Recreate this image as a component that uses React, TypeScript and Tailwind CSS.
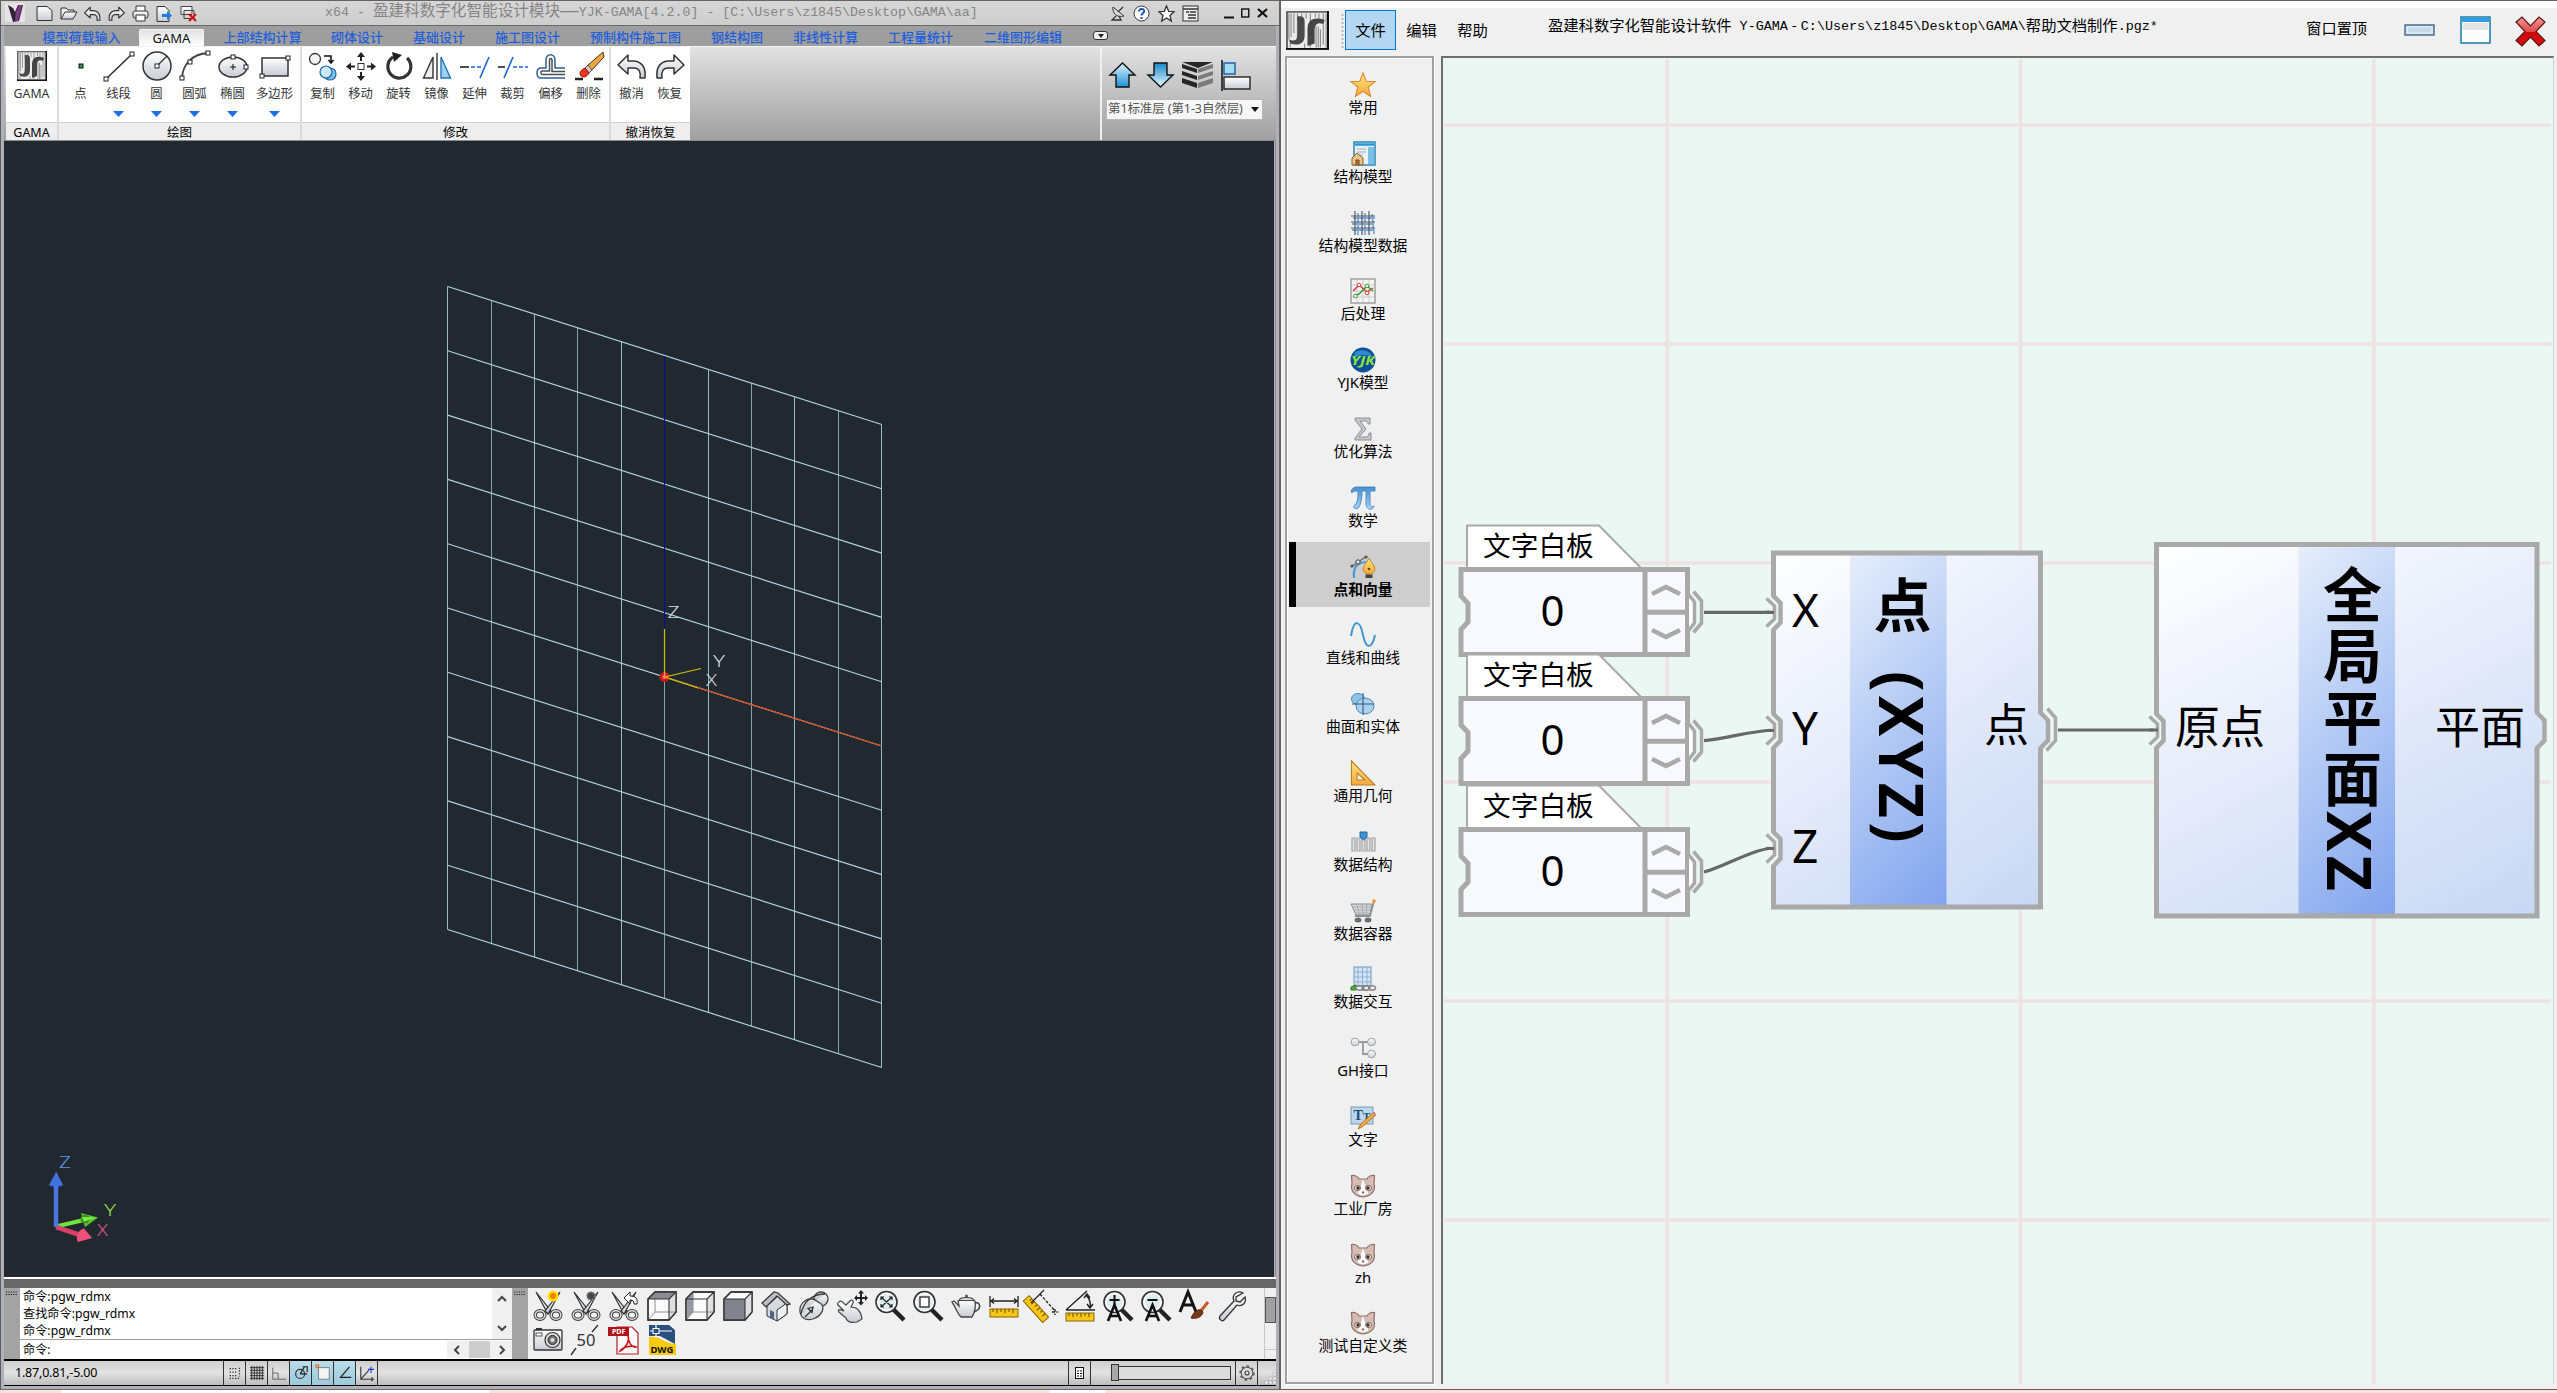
import React from "react";

type Kids = { children?: React.ReactNode };
const UI = "font-['Noto_Sans','Noto_Sans_CJK_SC',sans-serif]";

function Ico({ children, w = 32, h = 32, vb }: Kids & { w?: number; h?: number; vb?: string }) {
  return (
    <svg width={w} height={h} viewBox={vb ?? `0 0 ${w} ${h}`} fill="none" className="block shrink-0 overflow-visible">
      {children}
    </svg>
  );
}

function Defs() {
  return (
    <svg width="0" height="0" className="absolute">
      <defs>
        <linearGradient id="steel" x1="0" y1="0" x2="0" y2="1">
          <stop offset="0" stopColor="#ffffff" />
          <stop offset="1" stopColor="#c9cbd4" />
        </linearGradient>
        <linearGradient id="sky" x1="0" y1="0" x2="0" y2="1">
          <stop offset="0" stopColor="#dff2fc" />
          <stop offset="1" stopColor="#1e94d4" />
        </linearGradient>
        <linearGradient id="skyUp" x1="0" y1="1" x2="0" y2="0">
          <stop offset="0" stopColor="#e8f8fc" />
          <stop offset="1" stopColor="#1588cc" />
        </linearGradient>
        <linearGradient id="gold" x1="0" y1="0" x2="0" y2="1">
          <stop offset="0" stopColor="#ffe680" />
          <stop offset="1" stopColor="#f6a93c" />
        </linearGradient>
        <linearGradient id="red" x1="0" y1="0" x2="0" y2="1">
          <stop offset="0" stopColor="#f59a9a" />
          <stop offset="0.5" stopColor="#e04848" />
          <stop offset="0.52" stopColor="#cc0a0a" />
          <stop offset="1" stopColor="#dd0c0c" />
        </linearGradient>
        <linearGradient id="piBlue" x1="0" y1="0" x2="0" y2="1">
          <stop offset="0" stopColor="#4a90cc" />
          <stop offset="1" stopColor="#a8d4f8" />
        </linearGradient>
        <linearGradient id="nodeBody" x1="0" y1="0" x2="0.65" y2="1.19">
          <stop offset="0" stopColor="#ffffff" />
          <stop offset="0.55" stopColor="#e1e8f9" />
          <stop offset="1" stopColor="#c7d8f4" />
        </linearGradient>
        <linearGradient id="nodeBand" x1="0" y1="0" x2="0.36" y2="1.19">
          <stop offset="0" stopColor="#e6eefa" />
          <stop offset="0.5" stopColor="#b2c9f4" />
          <stop offset="1" stopColor="#82a4ed" />
        </linearGradient>
      </defs>
    </svg>
  );
}

/* ---------- ribbon icons (30 x 30) ---------- */
function GamaLogo({ w, h }: { w: number; h: number }) {
  return (
    <svg width={w} height={h} viewBox="0 0 30 30" preserveAspectRatio="none" className="block shrink-0">
      <rect x="0.7" y="0.7" width="28.6" height="28.6" fill="#ececec" stroke="#555" strokeWidth="1.2" />
      <path d="M2 2v20M3.500 2v18M5.500 2v15M8 2v22M11 2v6M14 2v4M17 2v26M20.500 2v3M23 2v4M26 2v24M28 2v26M24 14v14M21 12v16M22.500 12v16M3 25v3M13 25v4" stroke="#8a8a8a" strokeWidth="0.8" />
      <path d="M9 4c3 0 4 1 4 4v11c0 6-4 8-10 6l-1-3c5 2 6 0 6-5V8c0-2-1-4 1-4z" fill="#4a4a4a" />
      <path d="M15 27V14c0-7 4-10 12-7l-1 3c-5-2-6 1-6 6v9z" fill="#454545" />
      <path d="M0 29.200h30M29.300 0v30" stroke="#111" strokeWidth="1.400" />
    </svg>
  );
}
const Sq = ({ x, y }: { x: number; y: number }) => (
  <rect x={x - 2} y={y - 2} width="4" height="4" fill="#fff" stroke="#222" />
);
const PointI = () => <Ico w={30} h={30}><rect x="13" y="13" width="4" height="4" fill="#2e9a50" stroke="#111" /></Ico>;
const LineI = () => <Ico w={30} h={30}><path d="M2 28L28 3" stroke="#333" strokeWidth="1.6" /><Sq x={2} y={28} /><Sq x={28} y={3} /></Ico>;
const CircleI = () => <Ico w={30} h={30}><circle cx="15" cy="15" r="14" fill="url(#steel)" stroke="#333" strokeWidth="1.5" /><path d="M15 15L25 5" stroke="#333" strokeWidth="1.2" /><Sq x={15} y={15} /></Ico>;
const ArcI = () => <Ico w={30} h={30}><path d="M2 27C3 13 12 3 28 2" stroke="#444" strokeWidth="1.8" /><Sq x={2} y={27} /><Sq x={10} y={11} /><Sq x={28} y={2} /></Ico>;
const EllipseI = () => <Ico w={30} h={30}><ellipse cx="15" cy="16" rx="14" ry="10" fill="url(#steel)" stroke="#333" strokeWidth="1.5" /><path d="M12 16h6M15 13v6" stroke="#111" /><Sq x={15} y={6} /><Sq x={28} y={16} /></Ico>;
const RectI = () => <Ico w={30} h={30}><rect x="2" y="7" width="26" height="18" fill="url(#steel)" stroke="#333" strokeWidth="1.5" /><Sq x={28} y={7} /><Sq x={2} y={25} /></Ico>;
const CopyI = () => <Ico w={30} h={30}><circle cx="7" cy="8" r="5.500" fill="#f4f4f4" stroke="#333" strokeWidth="1.300" /><path d="M16 5h7v6M20.500 9l2.500 3 2.500-3" stroke="#111" strokeWidth="1.600" /><circle cx="22" cy="23" r="6" fill="#7cc4ee" stroke="#2063a8" strokeWidth="1.200" /><circle cx="18" cy="21" r="6" fill="#c8e8fb" stroke="#2063a8" strokeWidth="1.200" /></Ico>;
const MoveI = () => <Ico w={30} h={30}><rect x="12" y="12.500" width="6" height="6" fill="#fff" stroke="#333" /><path d="M15 1l4 5h-3v4h-2V6h-3zM15 30l4-5h-3v-4h-2v4h-3zM0 15.500l5-4v3h4v2H5v3zM30 15.500l-5-4v3h-4v2h4v3z" fill="#222" /></Ico>;
const RotateI = () => <Ico w={30} h={30}><path d="M9 6a11.500 11.500 0 1 0 14 1" stroke="#333" strokeWidth="3.200" /><path d="M8 1l10 3-8 7z" fill="#222" /></Ico>;
const MirrorI = () => <Ico w={30} h={30}><path d="M11 6v21H1.500z" fill="#eee" stroke="#333" strokeWidth="1.400" /><path d="M19 6v21h9.500z" fill="#9fd2ee" stroke="#2476b8" strokeWidth="1.400" /><path d="M15 2v27" stroke="#111" strokeWidth="1.200" /></Ico>;
const ExtendI = () => <Ico w={30} h={30}><path d="M0 16h9" stroke="#222" strokeWidth="1.600" /><path d="M11 16h10" stroke="#1665d8" strokeWidth="1.600" strokeDasharray="4 2" /><path d="M29 6l-9 21" stroke="#1665d8" strokeWidth="1.600" /></Ico>;
const TrimI = () => <Ico w={30} h={30}><path d="M0 16h7" stroke="#222" strokeWidth="1.600" /><path d="M15 16h15" stroke="#1665d8" strokeWidth="1.600" strokeDasharray="4 2" /><path d="M15 6L6 27" stroke="#1665d8" strokeWidth="1.600" /></Ico>;
const OffsetI = () => (
  <Ico w={30} h={30}>
    <path d="M29 27H4c-4-1-4-9 0-10h6V9c0-7 9-7 9 0v8h10" stroke="#2a5f94" strokeWidth="1.500" />
    <path d="M29 23.500H6c-1.500-1-1.500-3 0-3.500h7.500V9c0-2 2.500-2 2.500 0v11.500h13" stroke="#4a4e54" strokeWidth="1.500" />
  </Ico>
);
const EraseI = () => <Ico w={30} h={30}><path d="M1 28h8M20 28h9" stroke="#222" strokeWidth="2.500" /><path d="M29 1L13 15l4 5L30 6z" fill="#e8a848" stroke="#4a3010" /><path d="M14 14l-3 3 4 5 3-3z" fill="#ccc" stroke="#555" /><path d="M11 17c-5 2-6 6-4 8s6 1 8-3z" fill="#e83820" stroke="#a01800" /></Ico>;
const UndoI = ({ flip = false, s = 30 }: { flip?: boolean; s?: number }) => (
  <Ico w={s} h={s} vb="0 0 30 30"><path transform={flip ? "translate(30 0) scale(-1 1)" : undefined} d="M1 14L11 4v6h6c9 1 12 7 11 17h-5c1-6-1-10-6-10h-6v6z" fill="url(#steel)" stroke="#333" strokeWidth={s < 20 ? 2 : 1.5} strokeLinejoin="round" /></Ico>
);

type Tool = { label: string; icon: React.ReactNode; more?: boolean; wide?: boolean };
const drawTools: Tool[] = [
  { label: "点", icon: <PointI /> },
  { label: "线段", icon: <LineI />, more: true },
  { label: "圆", icon: <CircleI />, more: true },
  { label: "圆弧", icon: <ArcI />, more: true },
  { label: "椭圆", icon: <EllipseI />, more: true },
  { label: "多边形", icon: <RectI />, more: true, wide: true },
];
const editTools: Tool[] = [
  { label: "复制", icon: <CopyI /> },
  { label: "移动", icon: <MoveI /> },
  { label: "旋转", icon: <RotateI /> },
  { label: "镜像", icon: <MirrorI /> },
  { label: "延伸", icon: <ExtendI /> },
  { label: "裁剪", icon: <TrimI /> },
  { label: "偏移", icon: <OffsetI /> },
  { label: "删除", icon: <EraseI /> },
];
const undoTools: Tool[] = [
  { label: "撤消", icon: <UndoI /> },
  { label: "恢复", icon: <UndoI flip /> },
];

function Panel({ title, tools, cls }: { title: string; tools: Tool[]; cls: string }) {
  return (
    <div className={`flex h-full shrink-0 flex-col bg-white ${cls}`}>
      <div className="flex h-[76px] justify-center pt-[4px]">
        {tools.map((t) => (
          <div key={t.label} className={`flex flex-col items-center ${t.wide ? "w-[46px]" : "w-[38px]"}`}>
            {t.icon}
            <span className="mt-[5px] h-[16px] text-[12.300px] leading-[16px] whitespace-nowrap text-[#333]">{t.label}</span>
            {t.more && (
              <svg width="11" height="6" className="mt-[9px] block"><path d="M0 0h11L5.500 6z" fill="#1a6fe6" /></svg>
            )}
          </div>
        ))}
      </div>
      <div className="h-[18px] border-t border-[#d0d0d0] bg-[#eeeeee] text-center text-[12.500px] leading-[19px] whitespace-nowrap text-black">{title}</div>
    </div>
  );
}

const menuTabs: { t: string; c: string }[] = [
  { t: "模型荷载输入", c: "w-[97px]" },
  { t: "GAMA", c: "" },
  { t: "上部结构计算", c: "w-[107px]" },
  { t: "砌体设计", c: "w-[82px]" },
  { t: "基础设计", c: "w-[82px]" },
  { t: "施工图设计", c: "w-[95px]" },
  { t: "预制构件施工图", c: "w-[121px]" },
  { t: "钢结构图", c: "w-[82px]" },
  { t: "非线性计算", c: "w-[95px]" },
  { t: "工程量统计", c: "w-[95px]" },
  { t: "二维图形编辑", c: "w-[110px]" },
];

function CadTitleBar() {
  return (
    <div className="flex h-[25px] items-center border-b border-[#6a6a6a] bg-gradient-to-b from-[#d6d6d6] to-[#cecece]">
      <div className="ml-[4px]">
        <Ico w={20} h={20}><rect width="20" height="19" fill="#e4e4e4" /><path d="M3 2l5 3 2 4 3-7 5 0-4 16-6 1z" fill="#35203a" /><path d="M11 9l3-7 3 0-4 16-3 0z" fill="#7a3d7c" /></Ico>
      </div>
      <div className="ml-[11px] flex items-center gap-[7px]">
        <Ico w={17} h={17}><path d="M1 1.500h10l5 4v10H1z" fill="url(#steel)" stroke="#333" /></Ico>
        <Ico w={17} h={17}><path d="M1 14V3h5l2 2h6v3" fill="#eee" stroke="#333" /><path d="M1 14l4-7h12l-4 7z" fill="url(#steel)" stroke="#333" /></Ico>
        <UndoI s={17} />
        <UndoI s={17} flip />
        <Ico w={17} h={17}><path d="M4 6V1h9v5" fill="#fff" stroke="#333" /><rect x="1" y="6" width="15" height="7" rx="2" fill="url(#steel)" stroke="#333" /><path d="M4 10h9v6H4z" fill="#fff" stroke="#333" /></Ico>
        <Ico w={17} h={17}><path d="M1 1.500h8l4 4v11H1z" fill="url(#steel)" stroke="#333" /><path d="M6 9h5V6l5 4.500-5 4.500v-3H6z" fill="#1c7fe0" /></Ico>
        <Ico w={17} h={17}><path d="M1 1.500h11v8H1zM4 5.500h10v8H4z" fill="url(#steel)" stroke="#444" /><path d="M9 9l7 7M16 9l-7 7" stroke="#d81010" strokeWidth="2.200" /></Ico>
      </div>
      <div className="ml-[128px] flex w-[660px] items-center whitespace-pre font-['Liberation_Mono','Noto_Sans_CJK_SC',monospace] text-[13.300px] text-[#858585]">
        <span>{"x64 - "}</span>
        <span className="text-[15.600px]">盈建科数字化智能设计模块——</span>
        <span>{"YJK-GAMA[4.2.0] - [C:\\Users\\z1845\\Desktop\\GAMA\\aa]"}</span>
      </div>
      <div className="ml-auto flex items-center pr-[11px]">
        <div className="flex w-[89px] items-center justify-between">
          <Ico w={16} h={16}><path d="M3 2c-1 6 4 11 11 9z" fill="#ddd" stroke="#333" /><path d="M8 7l5-5M6 11l-4 4h9l-2-4" stroke="#333" strokeWidth="1.300" /></Ico>
          <Ico w={17} h={17}><circle cx="8.500" cy="8.500" r="7.500" fill="#fff" stroke="#333" /><path d="M6 6.500c0-3.500 5.300-3.300 5.200 0C11 8.500 8.500 8.300 8.500 10.500M8.500 12v2" stroke="#1d50b8" strokeWidth="2" /></Ico>
          <Ico w={17} h={17}><path d="M8.500 1l2.200 5.300 5.300.4-4 3.700 1.300 5.600-4.800-3-4.800 3L5 10.400 1 6.700l5.300-.4z" fill="#fff" stroke="#333" strokeWidth="1.300" /></Ico>
          <Ico w={17} h={17}><rect x="1" y="1" width="15" height="15" fill="#eee" stroke="#333" /><path d="M1 4h15M4 7h3M8 7h6M6 10h8M6 13h8" stroke="#333" strokeWidth="1.400" /></Ico>
        </div>
        <div className="ml-[25px] flex items-center gap-[7px]">
          <Ico w={10} h={12}><path d="M0 10.500h10" stroke="#111" strokeWidth="2" /></Ico>
          <Ico w={9} h={10}><rect x="0.750" y="1" width="7" height="8" stroke="#111" strokeWidth="1.400" /></Ico>
          <Ico w={11} h={10}><path d="M1 1l9 8M10 1L1 9" stroke="#111" strokeWidth="2.200" /></Ico>
        </div>
      </div>
    </div>
  );
}

function MenuTabs() {
  return (
    <div className="flex h-[20px] items-end bg-[#9e9e9e] pl-[29px]">
      {menuTabs.map((m) =>
        m.t === "GAMA" ? (
          <div key={m.t} className="mr-[5px] ml-[9px] h-[17px] w-[65px] shrink-0 rounded-t-[2px] border border-b-0 border-[#f2f2f2] bg-gradient-to-b from-[#e2e2e2] to-white text-center text-[13px] leading-[17px] text-[#111]">GAMA</div>
        ) : (
          <div key={m.t} className={`h-[17px] shrink-0 text-center text-[13px] leading-[17px] font-medium whitespace-nowrap text-[#1f5fdc] ${m.c}`}>{m.t}</div>
        ),
      )}
      <div className="mb-[6px] ml-[15px] flex h-[9px] w-[15px] items-center justify-center rounded-[3px] border border-[#333] bg-[#f0f0f0]">
        <svg width="6" height="4" className="block"><path d="M0 0h6L3 4z" fill="#222" /></svg>
      </div>
    </div>
  );
}

function Ribbon() {
  return (
    <div className="flex h-[95px] border-t border-b border-t-[#f4f4f4] border-b-[#8a8a8a] bg-gradient-to-b from-[#e2e2e2] to-[#a0a0a0] pl-[2px]">
      <div className="flex h-[93px] shrink-0 gap-[2px] bg-[#dcdcdc]">
        <Panel title="GAMA" tools={[{ label: "GAMA", icon: <GamaLogo w={30} h={30} /> }]} cls="w-[51px]" />
        <Panel title="绘图" tools={drawTools} cls="w-[241px]" />
        <Panel title="修改" tools={editTools} cls="w-[307px]" />
        <Panel title="撤消恢复" tools={undoTools} cls="w-[79px]" />
      </div>
      <div className="ml-auto flex w-[176px] flex-col border-l-2 border-[#f0f0f0] pl-[4px]">
        <div className="flex h-[50px] items-center gap-[8px] pt-[6px] pl-[3px]">
          <Ico w={27} h={26}><path d="M13.500 1L26 13h-6v12H7V13H1z" fill="url(#sky)" stroke="#111" strokeWidth="1.400" /></Ico>
          <div className="ml-[3px]"><Ico w={27} h={26}><path d="M13.500 25L26 13h-6V1H7v12H1z" fill="url(#skyUp)" stroke="#111" strokeWidth="1.400" /></Ico></div>
          <Ico w={31} h={28}>
            <path d="M0 1h31l-15 6zM0 3l15 5V12L0 7zM0 10l15 5V19L0 14zM0 17l15 5V27L0 22z" fill="#262626" />
            <path d="M31 3L16 8V12L31 7zM31 10L16 15V19L31 14zM31 17L16 22V27L31 22z" fill="#7b7b7b" />
          </Ico>
          <Ico w={30} h={31}><path d="M1 0v31" stroke="#111" strokeWidth="1.500" /><rect x="3" y="3" width="11" height="11" fill="#a6dcf0" stroke="#1b64ac" strokeWidth="1.500" /><rect x="3" y="17" width="26" height="12" fill="url(#steel)" stroke="#222" strokeWidth="1.400" /></Ico>
        </div>
        <div className="mt-[2px] flex h-[21px] w-[157px] items-center justify-between border border-[#b8b8b8] bg-[#f6f6f6] pr-[3px] pl-[1px] text-[12.500px] whitespace-nowrap text-[#555]">
          <span className="tracking-[-0.100px]">第1标准层 (第1-3自然层)</span>
          <svg width="8" height="5" className="block"><path d="M0 0h8L4 5z" fill="#111" /></svg>
        </div>
      </div>
    </div>
  );
}

function Viewport() {
  const n = Array.from({ length: 11 }, (_, i) => i);
  return (
    <div className="h-[1136px] w-[1270px] bg-[#212830]">
      <svg width="1270" height="1136" viewBox="4 141 1270 1136" fill="none" className={`block ${UI}`}>
        {n.map((i) => (
          <path
            key={`v${i}`}
            d={i === 5 ? "M664.500 677V998.500" : `M${Math.floor(447.7 + i * 43.4) + 0.5} ${286.5 + i * 13.8}v643`}
            stroke="#a4ccd6"
            strokeWidth="1"
            strokeOpacity={i % 2 ? 0.75 : 0.9}
          />
        ))}
        {n.map((i) => (
          <path key={`h${i}`} d={`M447.700 ${286.5 + i * 64.3}l434 138`} stroke="#a9d3de" strokeWidth="1.200" />
        ))}
        <path d="M664.500 356V630" stroke="#0c0c96" strokeWidth="1" />
        <path d="M664.700 677L881.700 746" stroke="#e2430e" strokeWidth="1.300" />
        <circle cx="664.500" cy="677" r="5" fill="#d01818" />
        <path d="M664.500 629V677L701 668.500M664.500 677L698 688" stroke="#c8c400" strokeWidth="1.200" />
        <circle cx="664.500" cy="677" r="2" fill="#ff7a6a" />
        <g fill="#d4d8da" fontSize="16" fontWeight="300">
          <text x="667.500" y="617.500" textLength="12" lengthAdjust="spacingAndGlyphs">Z</text>
          <text x="713" y="666.500" textLength="12" lengthAdjust="spacingAndGlyphs">Y</text>
          <text x="706" y="685.500" textLength="11" lengthAdjust="spacingAndGlyphs">X</text>
        </g>
        <path d="M58 1226L84 1220" stroke="#6fe43a" strokeWidth="4" />
        <path d="M81 1213L98 1217.500L85 1227z" fill="#5cc42e" />
        <circle cx="85" cy="1219" r="4.500" fill="#3f8f22" />
        <path d="M82 1217l15 0.500-13 4z" fill="#7df04a" />
        <path d="M56 1227L80 1235" stroke="#dc4068" strokeWidth="4.500" />
        <path d="M84 1228.500L92 1238 78 1242c-3-5 0-12 6-13.500z" fill="#ee5078" />
        <path d="M56 1227V1184" stroke="#4a76e0" strokeWidth="4.500" />
        <path d="M56.200 1171.500L63 1185c-4 2-10 2-14 0z" fill="#4270e0" />
        <g fontSize="16" fontWeight="300">
          <text x="59" y="1168" fill="#5a9ae0" textLength="12" lengthAdjust="spacingAndGlyphs">Z</text>
          <text x="104" y="1216" fill="#96dc50" textLength="12" lengthAdjust="spacingAndGlyphs">Y</text>
          <text x="97" y="1236" fill="#d85a8c" textLength="11" lengthAdjust="spacingAndGlyphs">X</text>
        </g>
      </svg>
    </div>
  );
}

/* ---------- lower tool icons (32 x 32) ---------- */
const Scissors = ({ children }: Kids) => (
  <Ico>
    <path d="M4 2l15 19-3 3z" fill="url(#steel)" stroke="#333" strokeWidth="1.200" />
    <path d="M28 2L13 21l3 3z" fill="url(#steel)" stroke="#333" strokeWidth="1.200" />
    <ellipse cx="8" cy="25" rx="4.800" ry="4.300" stroke="#3a3a3a" strokeWidth="3.400" />
    <ellipse cx="24" cy="25" rx="4.800" ry="4.300" stroke="#3a3a3a" strokeWidth="3.400" />
    <ellipse cx="8" cy="25" rx="4.800" ry="4.300" stroke="#dedede" strokeWidth="1.500" />
    <ellipse cx="24" cy="25" rx="4.800" ry="4.300" stroke="#dedede" strokeWidth="1.500" />
    {children}
  </Ico>
);
const Cube = ({ face }: { face: "top" | "left" | "front" }) => (
  <Ico>
    <path d="M2 9l7-7h21v20l-7 8H2z" fill="#fafafa" stroke="#333" strokeWidth="1.300" />
    <path d="M23 9l7-7v20l-7 8z" fill="#dfdfe4" />
    {face === "top" && <path d="M2 9l7-7h21l-7 7z" fill="#8b8d95" />}
    {face === "left" && <path d="M2 9l7-7v20l-7 8z" fill="#9599a4" />}
    {face !== "front" && <path d="M9 2v20h21M9 22l-7 8" stroke="#888" strokeWidth="0.900" />}
    {face === "front" && <path d="M2 9h21v21H2z" fill="#80838d" />}
    <path d="M2 9h21v21M23 9l7-7" stroke="#333" strokeWidth="1.100" />
    <path d="M2 9l7-7h21v20l-7 8H2z" stroke="#333" strokeWidth="1.300" />
  </Ico>
);
const Lens = ({ children }: Kids) => (
  <Ico>
    <path d="M19 19l11 11" stroke="#222" strokeWidth="4.500" />
    <circle cx="12.500" cy="12" r="10.500" fill="#dcebee" stroke="#333" strokeWidth="1.600" />
    <circle cx="12.500" cy="12" r="8.500" stroke="#fff" strokeWidth="1.300" />
    {children}
  </Ico>
);
const Ruler = ({ y = 20 }: { y?: number }) => (
  <>
    <rect x="2" y={y} width="28" height="8" fill="#f5c518" stroke="#8a6408" />
    <path d={`M5 ${y}v3M9 ${y}v4M13 ${y}v3M17 ${y}v4M21 ${y}v3M25 ${y}v4`} stroke="#6a4a00" />
  </>
);
const letterMark = (
  <path d="M6 31L12.500 15 19 31M8.500 26h8" stroke="#111" strokeWidth="2.600" />
);

const rowOne: React.ReactNode[] = [
  <Scissors><circle cx="21" cy="6" r="5.500" fill="#ffe000" /><circle cx="21" cy="6" r="3" fill="#f57c00" /></Scissors>,
  <Scissors><circle cx="21" cy="6" r="4" fill="#444" stroke="#888" strokeDasharray="1 1" strokeWidth="2" /></Scissors>,
  <Scissors><path d="M16 8l6-6v4c6 0 8 3 7 8h-3c0-3-1-4-4-4v4z" fill="#fff" stroke="#222" /></Scissors>,
  <Cube face="top" />,
  <Cube face="left" />,
  <Cube face="front" />,
  <Ico><path d="M7 16v10l10 5 10-7V13L18 6z" fill="#d6d9de" stroke="#333" /><path d="M17 20v11l10-7V13z" fill="#f0f1f3" stroke="#333" /><path d="M2 13L14 2l4 1 12 11-3 1L17 6 6 17z" fill="#b9bdc5" stroke="#333" strokeWidth="1.200" /><path d="M10 20l4 2v8l-4-2z" fill="#4b6582" /></Ico>,
  <Ico><circle cx="23" cy="9" r="7" fill="url(#steel)" stroke="#444" strokeWidth="1.300" /><path d="M2 22c-1-8 6-14 12-13 4 0 5 3 8 4 6 4 2 13-7 16-7 2-12-1-13-7z" fill="url(#steel)" stroke="#444" strokeWidth="1.300" /><path d="M3 24C5 12 14 4 27 4M14 20l-7 7M15 17l-5 1.500 4 4z" stroke="#333" strokeWidth="1.300" fill="#333" fillOpacity="0.15" /></Ico>,
  <Ico><path d="M3 12c2-3 5 2 7 3l4-4c2-2 4 0 3 2l-2 4c6 0 10 4 11 12l-5 3c-6 1-10 0-11-4L3 22c-2-2 1-3 2-2l3 1-6-6c-1-1 0-3 1-3z" fill="url(#steel)" stroke="#444" strokeWidth="1.200" /><path d="M25 0l3 3.500h-2V7h3V5l3 3-3 3V9h-3v3h2l-3 3.500-3-3.500h2V9h-3v2l-3-3 3-3v2h3V3.500h-2z" fill="#222" /></Ico>,
  <Lens><path d="M7 7l11 10M18 7L7 17M7 10V7h3M15 7h3v3M18 14v3h-3M10 17H7v-3" stroke="#222" strokeWidth="1.200" /></Lens>,
  <Lens><rect x="8" y="7" width="9" height="10" fill="#fff" stroke="#333" strokeWidth="1.400" /></Lens>,
  <Ico><path d="M24 13c7-2 8 6 0 9" stroke="#444" strokeWidth="1.600" /><path d="M8 11c4-2 13-2 17 0 1 6 0 11-3 16H11c-4-3-4-8-9-15l2-1 5 5z" fill="url(#steel)" stroke="#444" strokeWidth="1.300" /><path d="M9 10.500c1-4 14-4 15 0z" fill="#ddd" stroke="#444" strokeWidth="1.200" /><circle cx="16.500" cy="6" r="1.500" fill="#555" /></Ico>,
  <Ico><Ruler y={19} /><path d="M2 6v11M30 6v11M3 11h26M6 8.500L3 11l3 2.500M26 8.500l3 2.500-3 2.500" stroke="#222" strokeWidth="1.300" /></Ico>,
  <Ico><g transform="rotate(48 8 8)"><rect x="3" y="10" width="29" height="8" fill="#f5c518" stroke="#8a6408" /><path d="M7 10v3M11 10v4M15 10v3M19 10v4M23 10v3M27 10v4" stroke="#6a4a00" /></g><path d="M5 13L18 0" stroke="#222" strokeWidth="1.300" /><path d="M14 4l15 17M26 22h6M29 19v6" stroke="#222" strokeDasharray="3 1.500" strokeWidth="1.300" /></Ico>,
  <Ico><Ruler y={23} /><path d="M2 20L23 1M2 20h29M22 5c4 4 5 8 4 13M20 8l3-4 3 4M23 14l3 4 3-4" stroke="#222" strokeWidth="1.400" /></Ico>,
  <Lens><path d="M12.500 5v10M7.500 10h10" stroke="#111" strokeWidth="2" />{letterMark}</Lens>,
  <Lens><path d="M7.500 10h10" stroke="#111" strokeWidth="2" />{letterMark}</Lens>,
  <Ico><path d="M2 22L10 2l8 20M5 15h10" stroke="#151515" strokeWidth="3" /><path d="M30 12l-8 10" stroke="#c85a28" strokeWidth="3" /><path d="M23 20c-4-1-7 2-10 8 6 1 11-1 12-6z" fill="#7a3a18" stroke="#4a2008" /></Ico>,
  <Ico><path d="M27 3c-5-3-12 1-9 8L4 26c-2 3 2 6 4 4l13-15c5 2 10-2 8-8l-5 5-4-1 0-4z" fill="url(#steel)" stroke="#333" strokeWidth="1.300" /></Ico>,
];
const rowTwo: React.ReactNode[] = [
  <Ico><rect x="2" y="6" width="28" height="20" rx="1" fill="url(#steel)" stroke="#333" strokeWidth="1.300" /><rect x="4" y="4" width="6" height="2" fill="#333" /><rect x="4" y="9" width="6" height="3" fill="#fff" stroke="#555" /><circle cx="20.500" cy="16" r="7.500" fill="#ddd" stroke="#333" strokeWidth="1.200" /><circle cx="20.500" cy="16" r="4.500" fill="#777" stroke="#222" /><circle cx="20.500" cy="16" r="2" fill="#ddd" /></Ico>,
  <Ico><path d="M22 8l6-7M1 31l5-7" stroke="#333" strokeWidth="1.400" /><text x="6.500" y="22" fontSize="16.500" fill="#333" className={UI}>50</text></Ico>,
  <Ico><path d="M9 3h15l6 6v21H9z" fill="#fafafa" stroke="#b02020" strokeWidth="1.200" /><rect x="0" y="3" width="21" height="9" fill="#b3141c" /><text x="4" y="10.300" fontSize="7" fontWeight="700" fill="#fff" className={UI}>PDF</text><path d="M20 12c2 5-3 13-8 15 2-4 12-6 16-4-4 1-8-5-8-11z" stroke="#d01820" strokeWidth="1.600" /></Ico>,
  <Ico><path d="M3 1h20l6 5v14L14 12H3z" fill="#2a4f7e" /><path d="M3 13c10-2 14 6 27 7v11H3z" fill="#f8ca10" /><path d="M10 1v12M4 7h22" stroke="#fff" strokeWidth="1.200" /><rect x="7" y="4.500" width="6" height="5" fill="#2a4f7e" stroke="#fff" /><text x="4.500" y="28.500" fontSize="9.500" fontWeight="700" fill="#111" className={UI}>DWG</text></Ico>,
];

function Grip({ cls }: { cls: string }) {
  return (
    <div className={`h-full shrink-0 bg-[#a3a3a3] pt-[3px] pl-[2px] ${cls}`}>
      <svg width="12" height="4" className="block"><path d="M0 1h12M0 3.500h12" stroke="#222" strokeDasharray="1.200 1.200" /></svg>
    </div>
  );
}
const Chev = ({ d }: { d: string }) => (
  <svg width="10" height="10" viewBox="0 0 10 10" fill="none" className="block"><path d={d} stroke="#444" strokeWidth="2" /></svg>
);

function CommandArea() {
  return (
    <div className="flex h-[71px] bg-[#f0f0f0]">
      <Grip cls="w-[16px]" />
      <div className="flex w-[492px] flex-col bg-white text-[12.200px] text-black">
        <div className="flex h-[52px] border-b border-[#a89c90]">
          <div className="flex flex-1 flex-col pl-[3px]">
            {["命令:pgw_rdmx", "查找命令:pgw_rdmx", "命令:pgw_rdmx"].map((l, i) => (
              <span key={i} className="h-[17px] leading-[17px]">{l}</span>
            ))}
          </div>
          <div className="flex w-[20px] flex-col items-center justify-between bg-[#f0f0f0] py-[6px]">
            <Chev d="M1 7l4-4 4 4" />
            <Chev d="M1 3l4 4 4-4" />
          </div>
        </div>
        <div className="flex h-[19px] items-center">
          <span className="flex-1 pl-[3px] leading-[18px]">命令:</span>
          <div className="flex h-[17px] w-[65px] items-center justify-between bg-[#f0f0f0] px-[5px]">
            <Chev d="M7 1L3 5l4 4" />
            <div className="h-[17px] w-[21px] bg-[#cdcdcd]" />
            <Chev d="M3 1l4 4-4 4" />
          </div>
        </div>
      </div>
      <Grip cls="w-[16px]" />
      <div className="flex flex-1 flex-col gap-[2px] pt-[2px] pl-[4px]">
        <div className="flex gap-[6px]">{rowOne.map((x, i) => <React.Fragment key={i}>{x}</React.Fragment>)}</div>
        <div className="flex gap-[6px]">{rowTwo.map((x, i) => <React.Fragment key={i}>{x}</React.Fragment>)}</div>
      </div>
      <div className="flex w-[12px] flex-col border-l border-[#c8c8d0] pt-[9px]">
        <div className="h-[26px] border border-[#555] bg-[#a0a0a0]" />
        <div className="mt-[26px] border-t border-[#c8c8d0]" />
      </div>
    </div>
  );
}

const snapIcons: { on?: boolean; g: React.ReactNode }[] = [
  { g: <path d="M3 4h9M3 8h9M3 12h9M14 3v10M3 15h12" stroke="#333" strokeDasharray="1.500 1.500" strokeWidth="1.400" /> },
  { g: <path d="M1 3h16M1 6h16M1 9h16M1 12h16M1 15h16M3 1v16M6 1v16M9 1v16M12 1v16M15 1v16" stroke="#333" strokeWidth="1.100" /> },
  { g: <path d="M2 3v13h15M2 9h6v7" stroke="#666" strokeWidth="1.100" /> },
  { on: true, g: <><circle cx="8" cy="10" r="5" stroke="#333" strokeWidth="1.300" /><path d="M8 10h8M8 10l5-8M11 2l5 0v6" stroke="#222" strokeWidth="1.300" /></> },
  { on: true, g: <><rect x="4" y="3" width="12" height="13" fill="#f4f4f4" stroke="#777" /><rect x="1" y="0" width="3" height="3" stroke="#e06a20" strokeWidth="1.200" /></> },
  { on: true, g: <path d="M14 2L4 14h12" stroke="#222" strokeWidth="1.400" /> },
  { g: <><path d="M2 2v14h14M2 16L11 6M14 14l2 2-2 2" stroke="#333" strokeWidth="1.200" /><path d="M10 5h7M13.500 2v7" stroke="#1838d8" strokeWidth="1.300" /></> },
];

function StatusBar() {
  return (
    <div className="flex h-[27px] border-t-2 border-b border-black bg-gradient-to-b from-[#cfcfcf] via-[#e2e2e2] to-[#bdbdbd]">
      <div className="w-[219px] pl-[11px] text-[12.500px] leading-[23px] tracking-[-0.200px] text-black">1.87,0.81,-5.00</div>
      <div className="flex border-l border-[#333]">
        {snapIcons.map((s, i) => (
          <div key={i} className={`flex h-[24px] w-[22px] items-center justify-center border-r border-r-[#333] ${s.on ? "bg-gradient-to-b from-[#b8dcea] to-[#9ccadc]" : ""}`}>
            <Ico w={16} h={16} vb="0 0 18 18">{s.g}</Ico>
          </div>
        ))}
      </div>
      <div className="ml-auto flex">
        <div className="flex h-[24px] w-[23px] items-center justify-center border-r border-l border-[#333]">
          <Ico w={9} h={12}><rect x="0.500" y="0.500" width="8" height="11" fill="#fff" stroke="#111" /><path d="M2 4h5M2 6.500h5M2 9h5" stroke="#111" strokeDasharray="2 1" /></Ico>
        </div>
        <div className="mt-[4px] ml-[20px] flex h-[15px] w-[120px] items-center">
          <div className="h-[17px] w-[8px] border border-[#333] bg-[#a8a8a8]" />
          <div className="h-[14px] flex-1 border border-l-0 border-[#333] bg-[#dcdcdc]" />
        </div>
        <div className="ml-[4px] flex h-[24px] w-[23px] items-center justify-center border-r border-l border-[#333]">
          <Ico w={16} h={16} vb="0 0 18 18"><circle cx="9" cy="9" r="6.500" stroke="#555" strokeWidth="1.200" /><circle cx="9" cy="9" r="7.800" stroke="#555" strokeWidth="1.600" strokeDasharray="3 3" /><circle cx="9" cy="9" r="2.300" stroke="#444" strokeWidth="1.300" /></Ico>
        </div>
        <div className="flex w-[18px] items-end justify-end pb-px">
          <Ico w={11} h={11}><path d="M8 0h3v3H8zM4 4h3v3H4zM8 4h3v3H8zM0 8h3v3H0zM4 8h3v3H4zM8 8h3v3H8z" fill="#f4f4f4" stroke="#999" strokeWidth="0.500" /></Ico>
        </div>
      </div>
    </div>
  );
}

function CadWindow() {
  return (
    <div className="flex h-[1389px] w-[1279px] shrink-0 flex-col border-l border-l-[#5c5c5c] bg-[#b0b0b8]">
      <CadTitleBar />
      <div className="flex flex-col pr-[3px] pl-[3px]">
        <MenuTabs />
        <Ribbon />
        <div className="border-r border-[#8a8a8a]"><Viewport /></div>
        <div className="h-[11px] border-t-2 border-white bg-[#676767]" />
        <CommandArea />
        <StatusBar />
      </div>
      <div className="mt-auto h-px bg-[#6a6a6a]" />
    </div>
  );
}

/* ---------- category icons (26 x 26) ---------- */
const CatI = () => (
  <Ico w={26} h={26}>
    <path d="M1.500 2.500C5 2 8 4 9 6h8c1-2 4-4 7.500-3.500L24 11c2 6-2 12-11 13C4 23 0 17 2 11z" fill="#d3beb6" stroke="#8e7068" strokeWidth="1.200" />
    <path d="M3.500 4.500l4 2-3 4zM22.500 4.500l-4 2 3 4z" fill="#eab4b0" />
    <path d="M13 6l2.500 8 3 6c-3 3-8 3-11 0l3-6z" fill="#fff" />
    <ellipse cx="7.500" cy="15" rx="3" ry="2.500" fill="#fff" stroke="#7a5c48" /><ellipse cx="18.500" cy="15" rx="3" ry="2.500" fill="#fff" stroke="#7a5c48" />
    <circle cx="8" cy="15" r="1.700" fill="#3a2a20" /><circle cx="18" cy="15" r="1.700" fill="#3a2a20" />
    <path d="M12 19h2l-1 1.500z" fill="#a05050" stroke="#a05050" />
  </Ico>
);
const categories: { t: string; g: React.ReactNode }[] = [
  { t: "常用", g: <Ico w={26} h={26}><path d="M13 1l3.200 8.200 9 .4-7 5.400 2.400 9.500L13 19.200 5.400 24.500l2.400-9.500-7-5.400 9-.4z" fill="url(#gold)" stroke="#d98a2c" strokeWidth="1.100" /></Ico> },
  { t: "结构模型", g: <Ico w={26} h={26}><rect x="4" y="1" width="21" height="23" fill="#e8f2f8" stroke="#1c80b4" strokeWidth="1.400" /><path d="M5 3.500h19" stroke="#2a98d8" strokeWidth="2.500" /><path d="M18 6h6v17h-6z" fill="#7cc0e4" /><path d="M7 8h9M7 11h9M7 14h6" stroke="#9cb0bc" /><path d="M2 17l5-5 6 5v7H2z" fill="#e8c48a" stroke="#8a5c28" /><path d="M6 24v-5h3v5" fill="#b07838" stroke="#704010" /></Ico> },
  { t: "结构模型数据", g: <Ico w={26} h={26}><path d="M3 8h22M2 14h22M2 20h22M8 3v22M15 3v22M22 4l2 20" stroke="#7aa8d8" strokeWidth="1.800" /><path d="M1 6h24M1 12h24M1 18h24M5 1v24M12 1v24M19 1v24" stroke="#555c64" strokeWidth="1.200" /></Ico> },
  { t: "后处理", g: <Ico w={26} h={26}><rect x="1" y="1" width="24" height="24" fill="#f4f4f4" stroke="#9a9a9a" strokeWidth="1.400" /><path d="M2 7h22M2 13h22M2 19h22M7 2v22M13 2v22M19 2v22" stroke="#ccc" /><path d="M3 13l6-6 8 7 6-4" stroke="#d84040" strokeWidth="1.500" /><path d="M4 18l5-2 8-8 6 5" stroke="#3e9a30" strokeWidth="1.500" /><circle cx="9" cy="7" r="1.800" fill="#fff" stroke="#d84040" /><circle cx="17" cy="8" r="1.800" fill="#fff" stroke="#3e9a30" /><circle cx="5.500" cy="18" r="1.800" fill="#fff" stroke="#3e9a30" /><circle cx="17" cy="15" r="1.800" fill="#fff" stroke="#d84040" /></Ico> },
  { t: "YJK模型", g: <Ico w={26} h={26}><circle cx="13" cy="13" r="12.500" fill="#0d4f94" /><path d="M5 5c8-4 16-1 18 6-6-4-12-4-19 0z" fill="#2c8ccc" /><text x="1" y="17.500" fontSize="12" fontStyle="italic" fontWeight="700" fill="#8fe040" textLength="24" lengthAdjust="spacingAndGlyphs" className={UI}>YJK</text></Ico> },
  { t: "优化算法", g: <Ico w={26} h={26}><path d="M5 2h15v6h-2c0-2-1-3-3-3h-5l6 8-7 8h6c3 0 4-1 4-4h2v7H5v-2l7-9-7-9z" fill="#c4c6ca" stroke="#8c9096" /></Ico> },
  { t: "数学", g: <Ico w={26} h={26}><path d="M1 6c2-4 4-4 7-4h17v4h-5v12c0 4 2 4 4 3-1 5-8 4-8-2V6h-4c0 8-1 14-4 17-3 2-6-1-3-3 3-3 3-8 3-14-3 0-5 0-6 2z" fill="url(#piBlue)" stroke="#3c86c4" strokeWidth="0.900" /></Ico> },
  { t: "点和向量", g: <Ico w={26} h={26}><path d="M4 24C3 14 6 8 18 8" stroke="#4a9ad4" strokeWidth="2.200" /><path d="M1 13L17 2" stroke="#666" strokeWidth="1.500" /><circle cx="8" cy="8" r="2.200" fill="#ddd" stroke="#444" /><circle cx="16" cy="3" r="1.600" fill="#555" /><circle cx="2" cy="12" r="1.600" fill="#555" /><path d="M19 4c2 4 6 8 6 12l-3 4h-6l-3-4c0-4 4-8 6-12z" fill="url(#gold)" stroke="#c48a20" /><circle cx="19" cy="15" r="1.300" fill="#6a4a10" /><rect x="15.500" y="20.500" width="7" height="3.500" fill="#444" /></Ico> },
  { t: "直线和曲线", g: <Ico w={26} h={26}><path d="M1 14C4-4 10-2 13 13s9 14 12 0" stroke="#3f96d0" strokeWidth="2" /></Ico> },
  { t: "曲面和实体", g: <Ico w={26} h={26}><ellipse cx="8" cy="8" rx="6.500" ry="5.500" fill="#8ec4ea" stroke="#4a86b8" /><ellipse cx="15" cy="15" rx="9" ry="8" fill="#a8d2f2" stroke="#4a86b8" /><path d="M13 2v22M2 13h22" stroke="#3a5a70" strokeWidth="1.100" /></Ico> },
  { t: "通用几何", g: <Ico w={26} h={26}><path d="M1.500 1L25 25H1.500zM7 13v7h8z" fill="url(#gold)" fillRule="evenodd" stroke="#b88024" strokeWidth="1.100" /></Ico> },
  { t: "数据结构", g: <Ico w={26} h={26}><path d="M2 9h3v13H2zM7 9h3v13H7zM12 9h3v13h-3zM17 9h3v13h-3zM22 9h3v13h-3z" fill="#e4e4e4" stroke="#a4a4a4" strokeWidth="1.200" /><path d="M10 3h7v5l-3.500 3L10 8z" fill="#3c90d4" stroke="#2068a4" /></Ico> },
  { t: "数据容器", g: <Ico w={26} h={26}><path d="M1 6h21l-2 11H6z" fill="#d2d4d6" stroke="#8a8c90" /><path d="M3 9h18M4 12h17M6 15h14M7 6l2 11M12 6l1 11M17 6l-1 11" stroke="#a6a8ac" strokeWidth="0.800" /><path d="M24 3l-4 15H5" stroke="#909296" strokeWidth="1.800" /><circle cx="24" cy="3" r="1.800" fill="#f0962c" /><ellipse cx="8" cy="22" rx="3.500" ry="2.500" fill="#6a6c70" /><ellipse cx="18" cy="22" rx="3.500" ry="2.500" fill="#6a6c70" /></Ico> },
  { t: "数据交互", g: <Ico w={26} h={26}><rect x="4" y="1" width="17" height="19" fill="#d4e4f4" stroke="#6c94bc" /><path d="M4 6h17M4 11h17M4 16h17M8 1v19M12.500 1v19M17 1v19" stroke="#8cb0d4" /><path d="M1 24v-3l5-2v5z" fill="#50b030" stroke="#2c7818" /><ellipse cx="10" cy="22" rx="4" ry="2.200" stroke="#888" strokeWidth="1.500" /><ellipse cx="16" cy="22" rx="4" ry="2.200" stroke="#777" strokeWidth="1.500" /><ellipse cx="22" cy="22" rx="3.500" ry="2.200" stroke="#888" strokeWidth="1.500" /></Ico> },
  { t: "GH接口", g: <Ico w={26} h={26}><path d="M5 7h16M13 7v12h8" stroke="#9a9a9a" strokeWidth="1.800" /><ellipse cx="5" cy="7" rx="4" ry="3.800" fill="url(#steel)" stroke="#a0a0a0" /><ellipse cx="21.500" cy="7" rx="4" ry="3.800" fill="url(#steel)" stroke="#a0a0a0" /><ellipse cx="21.500" cy="19" rx="4" ry="3.800" fill="url(#steel)" stroke="#a0a0a0" /></Ico> },
  { t: "文字", g: <Ico w={26} h={26}><rect x="1" y="3" width="22" height="17" fill="#bcd6ec" stroke="#7a98b4" /><text x="3.500" y="16" fontSize="14" fontWeight="700" fill="#1f4a74" className="font-['Liberation_Serif',serif]">T</text><text x="13" y="16" fontSize="11" fontWeight="700" fill="#1f4a74" className="font-['Liberation_Serif',serif]">T</text><path d="M24 8l2 3-14 12-4 2 2-4z" fill="#f6a83a" stroke="#a0681c" strokeWidth="0.800" /><path d="M22.500 9.500l1.500-1.500 2 3-1.500 1.500z" fill="#d88ab0" /></Ico> },
  { t: "工业厂房", g: <CatI /> },
  { t: "zh", g: <CatI /> },
  { t: "测试自定义类", g: <CatI /> },
];

function Sidebar() {
  return (
    <div className="ml-[4px] flex h-[1328px] w-[149px] shrink-0 flex-col border-2 border-[#a0a0a0] bg-[#f0f0f0] pt-[2px] shadow-[inset_1px_1px_0_#ffffff,1px_1px_0_#ffffff]">
      {categories.map((c) => {
        const on = c.t === "点和向量";
        return (
          <div key={c.t} className={`mx-[2px] mb-[3.800px] flex h-[65px] shrink-0 flex-col items-center pt-[12px] pl-[7px] ${on ? "bg-[#cecece] shadow-[inset_7px_0_0_#000]" : ""}`}>
            {c.g}
            <span className={`-mt-[2px] text-[14.800px] leading-[22px] whitespace-nowrap text-black ${on ? "font-bold" : ""}`}>{c.t}</span>
          </div>
        );
      })}
    </div>
  );
}

/* ---------- node canvas ---------- */
const EDGE = "#a9a9a9";

function ValueNode({ pos }: { pos: string }) {
  return (
    <div className={`absolute h-[134px] w-[248px] ${pos}`}>
      <svg width="248" height="134" viewBox="1458 524 248 134" fill="none" className="absolute inset-0 block">
        <path d="M1467 567V525.500H1599L1641 568" fill="#fff" stroke={EDGE} strokeWidth="2" />
        <path d="M1461 569.500H1687.500V654.500H1461V629.500L1468 622V603.500L1461 596z" fill="#f8f9ff" stroke={EDGE} strokeWidth="5" />
        <path d="M1645 569V655M1645 612.300H1687" stroke={EDGE} strokeWidth="5" />
        <path d="M1652 594l14-7 14 7M1652 630l14 7 14-7" stroke={EDGE} strokeWidth="4.500" />
        <path d="M1689 595l5.500 7v21l-5.500 7" fill="#fff" stroke={EDGE} strokeWidth="3.500" />
        <path d="M1693.500 591.500l8 9.500v22l-8 9.500" stroke={EDGE} strokeWidth="3.500" />
      </svg>
      <div className="relative pt-px pl-[25px] text-[27.700px] leading-[40px] text-black">文字白板</div>
      <div className="relative w-[189px] text-center text-[42px] leading-[89px] text-black">0</div>
    </div>
  );
}

function InPort({ x, y }: { x: number; y: number }) {
  return (
    <g transform={`translate(${x} ${y})`}>
      <path d="M-3 -17.500V18.500L5 9.500V-8.500z" fill="#ebf7f3" />
      <path d="M0 -24V-16L7 -9V10.500L0 18V24" stroke={EDGE} strokeWidth="4.500" fill="none" />
      <path d="M-7 -13.500L1 -6V7L-7 14.500" stroke={EDGE} strokeWidth="3.500" fill="none" />
    </g>
  );
}

function OutPort({ x, y, linked }: { x: number; y: number; linked?: boolean }) {
  return (
    <g transform={`translate(${x} ${y})`}>
      <path d="M-3 -18L7 -9V10L-3 19z" fill="#d9e4f8" />
      <path d="M0 -22V-17.500L7.500 -9.500V10.500L0 18V22" stroke={EDGE} strokeWidth="4.500" fill="none" />
      {linked && <path d="M7 -21.500L15 -12V10.500L6 20.500" stroke={EDGE} strokeWidth="3.500" fill="none" />}
    </g>
  );
}

function CanvasArea() {
  return (
    <div className={`relative ml-[7px] h-[1328px] w-[1113px] shrink-0 overflow-hidden border-t-2 border-l-2 border-r border-[#6e6e6e] border-r-[#d0d0d0] bg-[#ebf7f3] ${UI}`}>
      <svg width="1110" height="1326" viewBox="1443 58 1110 1326" fill="none" className="absolute inset-0 block">
        <path d="M1667.300 59V1384M2020.500 59V1384M2373.800 59V1384M1444 125H2551M1444 344H2551M1444 563H2551M1444 782H2551M1444 1001H2551M1444 1220H2551" stroke="#efe2e2" strokeWidth="3.500" />
        <path d="M1704 612.300H1773M1704 740.700C1730 738 1745 732 1773 730M1704 872C1726 866 1750 850 1773 848M2058 730H2156" stroke="#686868" strokeWidth="3.200" />
        <rect x="1773.500" y="553" width="267" height="354" fill="url(#nodeBody)" />
        <rect x="1850" y="555" width="96.500" height="350" fill="url(#nodeBand)" />
        <rect x="1773.500" y="553" width="267" height="354" stroke={EDGE} strokeWidth="5" />
        <rect x="2156.500" y="544.500" width="380.500" height="371.500" fill="url(#nodeBody)" />
        <rect x="2298.500" y="547" width="96.500" height="367" fill="url(#nodeBand)" />
        <rect x="2156.500" y="544.500" width="380.500" height="371.500" stroke={EDGE} strokeWidth="5" />
        <InPort x={1773.5} y={612} />
        <InPort x={1773.5} y={730} />
        <InPort x={1773.5} y={848} />
        <InPort x={2156.5} y={730} />
        <OutPort x={2040.5} y={730} linked />
        <OutPort x={2537} y={730} />
        <path d="M1766 612.300H1774M1766 730.500H1774M1766 848.500H1774M2149 730H2158" stroke="#686868" strokeWidth="3.200" />
      </svg>

      <ValueNode pos="left-[15px] top-[466px]" />
      <ValueNode pos="left-[15px] top-[594.500px]" />
      <ValueNode pos="left-[15px] top-[726px]" />

      <div className="absolute top-[495px] left-[330px] flex h-[354px] w-[268px] items-center text-black">
        <div className="flex w-[77px] flex-col pb-[6px] pl-[19px] text-[46px] leading-[118px]">
          <span>X</span>
          <span>Y</span>
          <span>Z</span>
        </div>
        <div className="flex h-full w-[97px] flex-col items-center pt-[21px] pl-[8px] font-bold [writing-mode:horizontal-tb]">
          <span className="text-[58px] leading-[61px]">点</span>
          <span className="mt-[36px] text-[61px] leading-[61px] tracking-[4px] [writing-mode:vertical-rl]">(XYZ)</span>
        </div>
        <div className="flex-1 pr-[12px] pb-[10px] text-right text-[45px] leading-[60px]">点</div>
      </div>

      <div className="absolute top-[487px] left-[713px] flex h-[371px] w-[381px] items-center text-black">
        <div className="w-[142px] pb-[8px] pl-[19px] text-[45px] leading-[60px] whitespace-nowrap">原点</div>
        <div className="flex h-full w-[97px] flex-col items-center pt-[20px] pl-[7px] font-bold">
          <span className="text-[59px] leading-[61px] tracking-[2.500px] whitespace-nowrap [writing-mode:vertical-rl]">全局平面<span className="text-[61px] tracking-[4px]">XZ</span></span>
        </div>
        <div className="flex-1 pr-[12px] pb-[8px] text-right text-[45px] leading-[60px] whitespace-nowrap">平面</div>
      </div>
    </div>
  );
}

function GamaWindow() {
  return (
    <div className="flex h-[1389px] flex-1 flex-col border-b border-l-2 border-[#6b6060] bg-[#f0f0f0]">
      <div className="h-[7px] shrink-0 bg-white" />
      <div className="flex h-[48px] shrink-0 items-start text-[15.300px] text-black">
        <div className="mt-[3px] ml-[5px]"><GamaLogo w={43} h={39} /></div>
        <svg width="3" height="34" className="mt-[6px] ml-[12px] block"><path d="M1.500 0v34" stroke="#b8b8b8" strokeWidth="2" strokeDasharray="2 2" /></svg>
        <div className="mt-[2px] ml-[1px] flex h-[40px] w-[51px] items-center justify-center border border-[#0078d7] bg-[#b3d7f3]">文件</div>
        <div className="mt-[2px] flex h-[40px] w-[51px] items-center justify-center">编辑</div>
        <div className="mt-[2px] flex h-[40px] w-[51px] items-center justify-center">帮助</div>
        <div className="mt-[8px] ml-[50px] flex w-[640px] items-center whitespace-pre font-['Liberation_Mono','Noto_Sans_CJK_SC',monospace] text-[13.400px] leading-[22px]">
          <span className="text-[15.300px]">盈建科数字化智能设计软件</span>
          <span>{" Y-GAMA"}</span>
          <span className="w-[13px] text-center">-</span>
          <span>{"C:\\Users\\z1845\\Desktop\\GAMA\\"}</span>
          <span className="text-[15.300px]">帮助文档制作</span>
          <span>.pgz*</span>
        </div>
        <div className="mt-[9px] ml-auto text-[15.200px] leading-[22px]">窗口置顶</div>
        <div className="mt-[16px] ml-[37px]"><Ico w={31} h={12}><rect x="1" y="1" width="29" height="10" fill="#c6d9e8" stroke="#4a6c90" strokeWidth="1.500" /><rect x="3" y="3" width="25" height="6" stroke="#eef5fa" /></Ico></div>
        <div className="mt-[8px] ml-[25px]"><Ico w={31} h={28}><rect x="1" y="1" width="29" height="26" fill="#fcfcfc" stroke="#137bb0" strokeWidth="1.500" /><rect x="2" y="2" width="27" height="4" fill="#2f9be0" /><rect x="2.500" y="7" width="26" height="7" fill="#dcdcdc" opacity="0.700" /></Ico></div>
        <div className="mt-[8px] mr-[11px] ml-[24px]"><Ico w={31} h={31}><path d="M1 6l6-5 8.500 9L24 1l6 5-9 9.500 9 9-6 5.500-8.500-9L7 30l-6-5.500 9-9z" fill="url(#red)" stroke="#5a1414" strokeWidth="1.200" /></Ico></div>
      </div>
      <div className="flex">
        <Sidebar />
        <CanvasArea />
      </div>
    </div>
  );
}

export default function App() {
  return (
    <div className={`h-[1393px] w-[2557px] overflow-hidden bg-[#f6e4dc] ${UI}`}>
      <Defs />
      <div className="h-px bg-[#6b6060]" />
      <div className="flex">
        <CadWindow />
        <GamaWindow />
      </div>
      <div className="flex h-[3px] pl-[61px]">
        <div className="w-[428px] bg-white" />
        <div className="ml-[560px] w-[56px] bg-white" />
      </div>
    </div>
  );
}
